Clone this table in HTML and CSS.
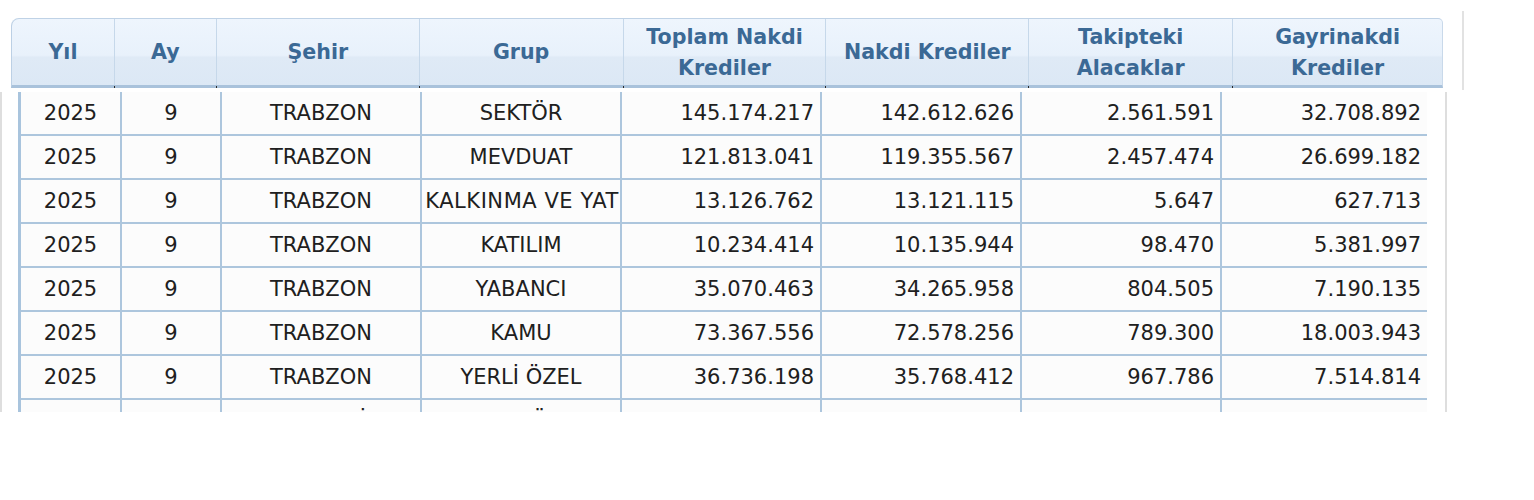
FILE: index.html
```html
<!DOCTYPE html>
<html lang="tr">
<head>
<meta charset="utf-8">
<title>Krediler</title>
<link rel="stylesheet" href="styles.css">
</head>
<body>
<div class="page">
  <div class="head-wrap">
    <div class="thead">
      <div class="th c-yil">Yıl</div>
      <div class="th c-ay">Ay</div>
      <div class="th c-sehir">Şehir</div>
      <div class="th c-grup">Grup</div>
      <div class="th c-toplam">Toplam Nakdi<br>Krediler</div>
      <div class="th c-nakdi">Nakdi Krediler</div>
      <div class="th c-takip">Takipteki<br>Alacaklar</div>
      <div class="th c-gayri last">Gayrinakdi<br>Krediler</div>
    </div>
  </div>
  <div class="body-wrap">
    <div class="tbody">
      <div class="tr"><div class="td">2025</div><div class="td">9</div><div class="td">TRABZON</div><div class="td">SEKTÖR</div><div class="td num">145.174.217</div><div class="td num">142.612.626</div><div class="td num">2.561.591</div><div class="td num">32.708.892</div></div>
      <div class="tr"><div class="td">2025</div><div class="td">9</div><div class="td">TRABZON</div><div class="td">MEVDUAT</div><div class="td num">121.813.041</div><div class="td num">119.355.567</div><div class="td num">2.457.474</div><div class="td num">26.699.182</div></div>
      <div class="tr"><div class="td">2025</div><div class="td">9</div><div class="td">TRABZON</div><div class="td wide">KALKINMA VE YAT</div><div class="td num">13.126.762</div><div class="td num">13.121.115</div><div class="td num">5.647</div><div class="td num">627.713</div></div>
      <div class="tr"><div class="td">2025</div><div class="td">9</div><div class="td">TRABZON</div><div class="td">KATILIM</div><div class="td num">10.234.414</div><div class="td num">10.135.944</div><div class="td num">98.470</div><div class="td num">5.381.997</div></div>
      <div class="tr"><div class="td">2025</div><div class="td">9</div><div class="td">TRABZON</div><div class="td">YABANCI</div><div class="td num">35.070.463</div><div class="td num">34.265.958</div><div class="td num">804.505</div><div class="td num">7.190.135</div></div>
      <div class="tr"><div class="td">2025</div><div class="td">9</div><div class="td">TRABZON</div><div class="td">KAMU</div><div class="td num">73.367.556</div><div class="td num">72.578.256</div><div class="td num">789.300</div><div class="td num">18.003.943</div></div>
      <div class="tr"><div class="td">2025</div><div class="td">9</div><div class="td">TRABZON</div><div class="td">YERLİ ÖZEL</div><div class="td num">36.736.198</div><div class="td num">35.768.412</div><div class="td num">967.786</div><div class="td num">7.514.814</div></div>
      <div class="tr"><div class="td">2025</div><div class="td">9</div><div class="td">TUNCELİ</div><div class="td">SEKTÖR</div><div class="td num">4.512.336</div><div class="td num">4.398.120</div><div class="td num">114.216</div><div class="td num">1.208.774</div></div>
    </div>
  </div>
</div>
</body>
</html>
```

FILE: styles.css
```css
html, body {
  margin: 0;
  padding: 0;
  background: #ffffff;
}

.page {
  width: 1534px;
  height: 500px;
  font-family: "DejaVu Sans", "Liberation Sans", sans-serif;
}

/* ---------- header ---------- */
.head-wrap {
  width: 1464px;
  height: 79px;
  margin-top: 11px;
  padding: 7px 0 0 11px;
  box-sizing: border-box;
  border-right: 2px solid #e2e2e2;
}

.thead {
  display: flex;
  width: 1432px;
  height: 70px;
  box-sizing: border-box;
  border-top: 1px solid #bfd2e6;
  border-left: 1px solid #bcd0e5;
  border-right: 1px solid #c9d9ea;
  border-bottom: 3px solid #a9c2db;
  border-radius: 8px 5px 0 0;
  background: linear-gradient(#eef5fd 0%, #e8f1fb 55%, #dfeaf6 58%, #dce8f5 100%);
}

.th {
  position: relative;
  display: flex;
  align-items: center;
  justify-content: center;
  text-align: center;
  box-sizing: border-box;
  border-right: 1px solid #c6d8ea;
  font-size: 20.6px;
  font-weight: bold;
  line-height: 31px;
  color: #3b6995;
  padding-top: 1px;
}

.th::after {
  content: "";
  position: absolute;
  right: -1px;
  bottom: -3px;
  width: 1px;
  height: 2px;
  background: #2a2a2a;
}

.th.last { border-right: 0; }
.th.last::after { display: none; }

.c-yil { width: 103px; }
.c-ay { width: 102px; }
.c-sehir { width: 203px; }
.c-grup { width: 204px; }
.c-toplam { width: 203px; }
.c-nakdi { width: 203px; }
.c-takip { width: 204px; }
.c-gayri { width: 209px; }

/* ---------- body ---------- */
.body-wrap {
  width: 1447px;
  height: 320px;
  margin-top: 2px;
  box-sizing: border-box;
  border-left: 2px solid #dedede;
  border-right: 2px solid #dedede;
  padding-left: 16px;
  overflow: hidden;
}

.tbody {
  width: 1409px;
  border-left: 3px solid #a9c4dd;
}

.tr {
  display: grid;
  grid-template-columns: 101px 100px 200px 200px 200px 200px 200px 205px;
  height: 44px;
}

.td {
  box-sizing: border-box;
  height: 44px;
  border-right: 2px solid #adc6dd;
  border-bottom: 2px solid #adc6dd;
  background: #fcfcfc;
  font-size: 21px;
  line-height: 42px;
  color: #202020;
  text-align: center;
  white-space: nowrap;
  overflow: hidden;
}

.td:last-child { border-right: 0; }

.td.num {
  text-align: right;
  padding-right: 6px;
}

.td.wide {
  letter-spacing: 0.55px;
  padding-left: 2px;
}
```
